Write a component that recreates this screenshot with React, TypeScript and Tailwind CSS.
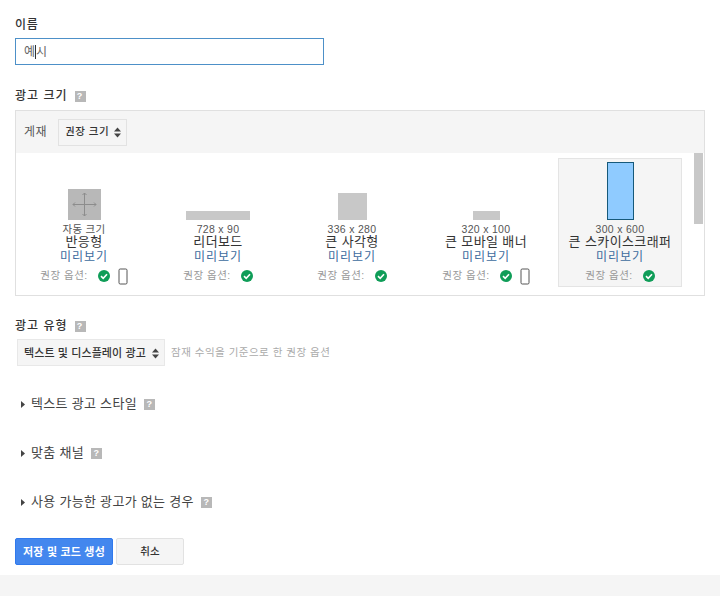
const sizes = [
  { dim: "자동 크기", name: "반응형", w: "w-[33px]", h: "h-[31px]", mobile: true, responsive: true },
  { dim: "728 x 90", name: "리더보드", w: "w-[64px]", h: "h-[9px]", mobile: false },
  { dim: "336 x 280", name: "큰 사각형", w: "w-[29px]", h: "h-[27px]", mobile: false },
  { dim: "320 x 100", name: "큰 모바일 배너", w: "w-[27px]", h: "h-[9px]", mobile: true },
  { dim: "300 x 600", name: "큰 스카이스크래퍼", w: "w-[27px]", h: "h-[58px]", mobile: false, selected: true },
]

function Help() {
  return (
    <span className="inline-flex h-[11px] w-[11px] items-center justify-center bg-[#b8b8b8] text-[9px] leading-none font-bold text-white">
      ?
    </span>
  )
}

function UpDown() {
  return (
    <svg width="7" height="11" viewBox="0 0 7 11" className="shrink-0 fill-[#444]">
      <path d="M3.5 0.5 7 4.5H0Z" />
      <path d="M3.5 10.5 7 6.5H0Z" />
    </svg>
  )
}

function Check() {
  return (
    <svg width="12" height="12" viewBox="0 0 12 12" className="shrink-0">
      <circle cx="6" cy="6" r="6" fill="#0f9d58" />
      <path d="M3 6.2 5.2 8.3 9 4.2" fill="none" stroke="#fff" strokeWidth="1.6" />
    </svg>
  )
}

function Phone() {
  return (
    <svg width="10" height="17" viewBox="0 0 10 17" className="shrink-0">
      <rect x="1" y="1" width="8" height="15" rx="1.2" fill="#fff" stroke="#555" strokeWidth="1" />
    </svg>
  )
}

function Responsive() {
  return (
    <svg width="33" height="31" viewBox="0 0 33 31" className="bg-[#b8b8b8]">
      <g fill="none" stroke="#8c8c8c" strokeWidth="1">
        <path d="M16.5 4V27M5 15.5H28" />
        <path d="M14.5 6 16.5 4 18.5 6M14.5 25 16.5 27 18.5 25M7 13.5 5 15.5 7 17.5M26 13.5 28 15.5 26 17.5" />
      </g>
    </svg>
  )
}

function Collapsed({ label }: { label: string }) {
  return (
    <div className="flex h-[20px] items-center pl-[21px] text-[13px] tracking-[0.3px] text-[#444]">
      <svg width="4" height="7" viewBox="0 0 4 7" className="mr-[6px] fill-[#444]">
        <path d="M0 0 4 3.5 0 7Z" />
      </svg>
      {label}
      <span className="ml-[7px] flex">
        <Help />
      </span>
    </div>
  )
}

export default function App() {
  return (
    <div
      className="flex h-[596px] w-[720px] flex-col overflow-hidden bg-white text-[#333]"
      style={{ fontFamily: '"Liberation Sans", "Noto Sans CJK KR", sans-serif' }}
    >
      <div className="flex flex-1 flex-col pl-[15px]">
        <div className="mt-[17px] h-[16px] text-[12px] leading-[16px] font-medium tracking-[0.8px] text-[#333]">이름</div>
        <div className="mt-[5px] flex h-[27px] w-[309px] items-center border border-[#4d90c8] pl-[8px] text-[12px] text-[#666]">
          예<span className="h-[14px] w-px bg-[#333]" />시
        </div>

        <div className="mt-[23px] flex h-[16px] items-center gap-[7px] text-[12px] font-medium tracking-[1px]">
          광고 크기 <Help />
        </div>

        <div className="mt-[6px] h-[186px] w-[690px] border border-[#e0e0e0]">
          <div className="flex h-[42px] items-center gap-[11px] bg-[#f5f5f5] pl-[8px] text-[12px] tracking-[0.5px] text-[#555]">
            게재
            <div className="flex h-[27px] w-[69px] items-center justify-between border border-[#e2e2e2] bg-[#f5f5f5] pr-[5px] pl-[6px] text-[10.5px] font-medium text-[#333]">
              권장 크기
              <UpDown />
            </div>
          </div>
          <div className="flex h-[142px]">
            <div className="flex flex-1 pt-[5px] pl-[1px]">
              {sizes.map((s) => (
                <div
                  key={s.name}
                  className={`mx-[5px] flex h-[129px] w-[124px] flex-col items-center ${
                    s.selected ? "border border-[#e4e4e4] bg-[#f5f5f5]" : "border border-transparent"
                  }`}
                >
                  <div className="flex h-[61px] w-full shrink-0 items-end justify-center">
                    {s.responsive ? (
                      <Responsive />
                    ) : (
                      <div
                        className={`${s.w} ${s.h} ${s.selected ? "border border-[#16597a] bg-[#8fcbff]" : "bg-[#c8c8c8]"}`}
                      />
                    )}
                  </div>
                  <div className="mt-[3px] h-[12px] text-[10.5px] leading-[13px] tracking-[0.3px] text-[#555]">{s.dim}</div>
                  <div className="h-[15px] text-[13px] leading-[14px] tracking-[0.4px] whitespace-nowrap text-[#333]">{s.name}</div>
                  <div className="h-[13px] text-[12px] leading-[15px] tracking-[1px] text-[#3d6c9e]">미리보기</div>
                  <div className="mt-[3px] flex h-[20px] items-center text-[10.5px] tracking-[0.5px] text-[#999]">
                    권장 옵션:
                    <span className="ml-[10px]">
                      <Check />
                    </span>
                    {s.mobile && (
                      <span className="ml-[8px] flex">
                        <Phone />
                      </span>
                    )}
                  </div>
                </div>
              ))}
            </div>
            <div className="mr-[1px] w-[9px]">
              <div className="h-[71px] bg-[#c8c8c8]" />
            </div>
          </div>
        </div>

        <div className="mt-[22px] flex h-[16px] items-center gap-[7px] text-[12px] font-medium tracking-[1px]">
          광고 유형 <Help />
        </div>

        <div className="mt-[5px] flex items-center pl-[2px]">
          <div className="flex h-[27px] w-[148px] items-center justify-between border border-[#e8e8e8] bg-[#f5f5f5] pt-[1px] pr-[5px] pl-[6px] text-[11px] font-medium tracking-[0.1px] whitespace-nowrap text-[#333]">
            텍스트 및 디스플레이 광고
            <UpDown />
          </div>
          <span className="ml-[6px] pt-[1px] text-[10.5px] tracking-[0.5px] text-[#aaa]">잠재 수익을 기준으로 한 권장 옵션</span>
        </div>

        <div className="-ml-[15px] mt-[28px] flex flex-col gap-[29px]">
          <Collapsed label="텍스트 광고 스타일" />
          <Collapsed label="맞춤 채널" />
          <Collapsed label="사용 가능한 광고가 없는 경우" />
        </div>

        <div className="mt-[26px] flex gap-[3px]">
          <div className="flex h-[27px] w-[98px] items-center justify-center rounded-[2px] border border-[#3079ed] bg-[#4387ee] pt-[1px] text-[11px] font-bold tracking-[0.2px] text-white">
            저장 및 코드 생성
          </div>
          <div className="flex h-[27px] w-[68px] items-center justify-center rounded-[2px] border border-[#e2e2e2] bg-[#f5f5f5] pt-[1px] text-[10.5px] font-medium text-[#333]">
            취소
          </div>
        </div>
      </div>
      <div className="h-[21px] bg-[#f5f5f5]" />
    </div>
  )
}
